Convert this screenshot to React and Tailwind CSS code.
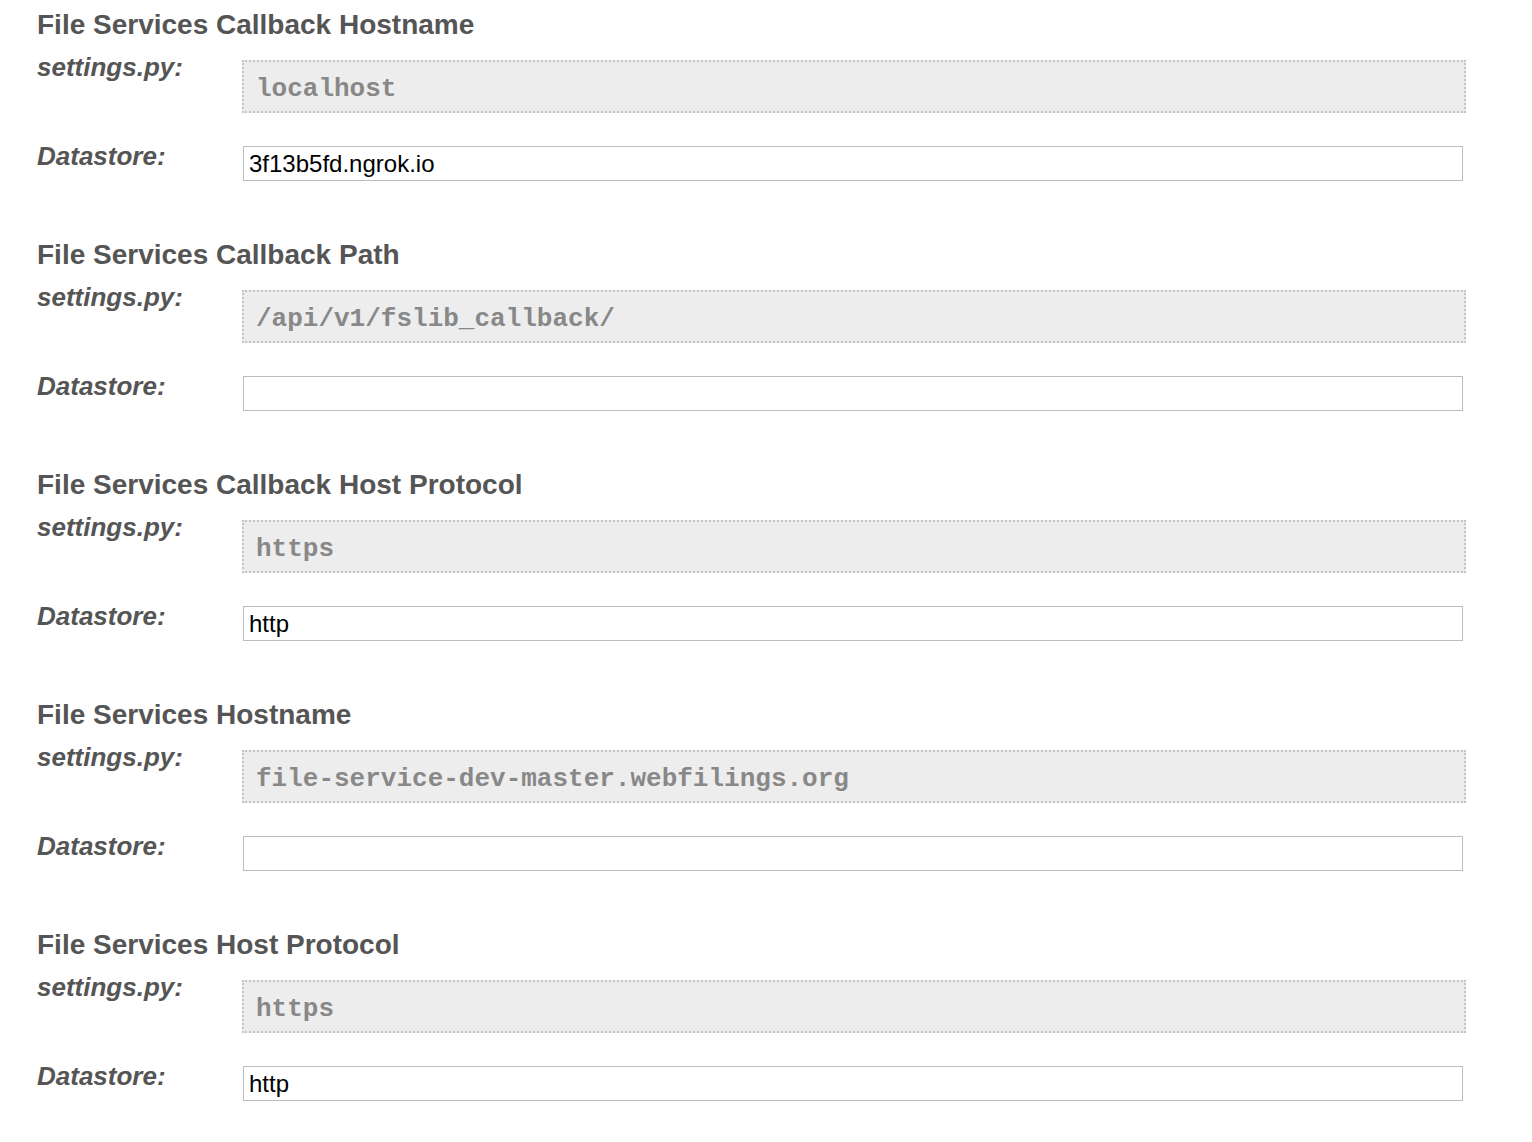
const settings = [
  { title: 'File Services Callback Hostname', file: 'localhost', store: '3f13b5fd.ngrok.io' },
  { title: 'File Services Callback Path', file: '/api/v1/fslib_callback/', store: '' },
  { title: 'File Services Callback Host Protocol', file: 'https', store: 'http' },
  { title: 'File Services Hostname', file: 'file-service-dev-master.webfilings.org', store: '' },
  { title: 'File Services Host Protocol', file: 'https', store: 'http' },
];

const SettingSection = ({ title, file, store }) => {
  return (
    <section className="pt-[9px] pb-[49px]">
      <h2 className="text-[28px] leading-[32px] font-bold text-[#555555]">{title}</h2>

      {/* settings.py value */}
      <div className="mt-[11px] flex items-start">
        <div className="w-[205px] shrink-0 text-[26px] leading-[30px] font-bold italic text-[#555555]">
          settings.py:
        </div>
        <div className="mt-[8px] w-[1224px] h-[53px] flex items-center border-2 border-dotted border-[#c4c4c4] bg-[#ededed] px-[12px] pt-[6px] font-['Liberation_Mono','Courier_New',monospace] text-[26px] font-bold text-[#888888]">
          {file}
        </div>
      </div>

      {/* Datastore value */}
      <div className="mt-[28px] flex items-start">
        <div className="w-[205px] shrink-0 text-[26px] leading-[30px] font-bold italic text-[#555555]">
          Datastore:
        </div>
        <input
          type="text"
          readOnly
          value={store}
          className="mt-[5px] ml-[1px] w-[1220px] h-[35px] border border-[#bdbdbd] bg-white px-[5px] text-[24px] text-black outline-none font-['Liberation_Sans',Arial,sans-serif]"
        />
      </div>
    </section>
  );
};

export default function App() {
  return (
    <div className="min-h-screen w-[1532px] bg-white pl-[37px] font-['Liberation_Sans',Arial,sans-serif]">
      {settings.map((s) => (
        <SettingSection key={s.title} {...s} />
      ))}
    </div>
  );
}
